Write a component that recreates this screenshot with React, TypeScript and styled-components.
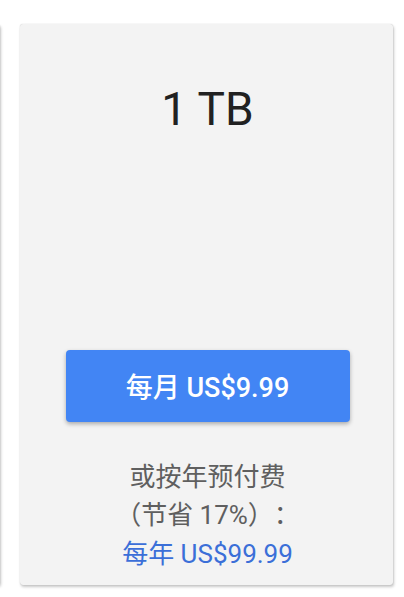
import React from 'react'
import styled, { createGlobalStyle } from 'styled-components'

const GlobalStyle = createGlobalStyle`
  html, body {
    margin: 0;
    padding: 0;
    background: #ffffff;
    font-family: Roboto, "Noto Sans CJK SC", sans-serif;
  }
`

const Viewport = styled.div`
  width: 404px;
  height: 597px;
  overflow: hidden;
  padding-top: 24px;
  box-sizing: border-box;
`

// carousel strip; the previous card sits just off the left edge
const Track = styled.div`
  display: flex;
  gap: 20px;
  margin-left: -373px;
`

const Card = styled.div`
  flex: 0 0 373px;
  height: 561px;
  box-sizing: border-box;
  background: #f3f3f3;
  border-radius: 3px;
  box-shadow: 1px 2px 3px rgba(0, 0, 0, 0.22), 0 0 1px rgba(0, 0, 0, 0.25);
  display: flex;
  flex-direction: column;
  align-items: center;
  padding: 58px 0 12px;
`

const Title = styled.div`
  font-size: 46px;
  line-height: 54px;
  color: #212121;
  font-weight: 400;
  padding-left: 2px;
`

const Spacer = styled.div`
  flex: 1;
`

const PriceButton = styled.button`
  width: 284px;
  height: 72px;
  margin-left: 2px;
  border: none;
  border-radius: 4px;
  background: #4285f4;
  color: #ffffff;
  font-family: Roboto, "Noto Sans CJK SC", sans-serif;
  font-size: 27px;
  font-weight: 500;
  box-shadow: 0 2px 4px rgba(0, 0, 0, 0.3);
  cursor: pointer;
  display: flex;
  align-items: center;
  justify-content: center;
`

const Note = styled.div`
  margin-top: 36px;
  font-size: 26px;
  line-height: 38.5px;
  color: #5f5f5f;
  text-align: center;
  margin-left: 2px;
  text-spacing-trim: space-all;
`

const YearPrice = styled.div`
  color: #3b6fd8;
`

export default function App() {
  return (
    <>
      <GlobalStyle />
      <Viewport>
        <Track>
          <Card />
          <Card>
            <Title>1 TB</Title>
            <Spacer />
            <PriceButton>每月 US$9.99</PriceButton>
            <Note>
              <div>或按年预付费</div>
              <div>（节省 17%）：</div>
              <YearPrice>每年 US$99.99</YearPrice>
            </Note>
          </Card>
        </Track>
      </Viewport>
    </>
  )
}
